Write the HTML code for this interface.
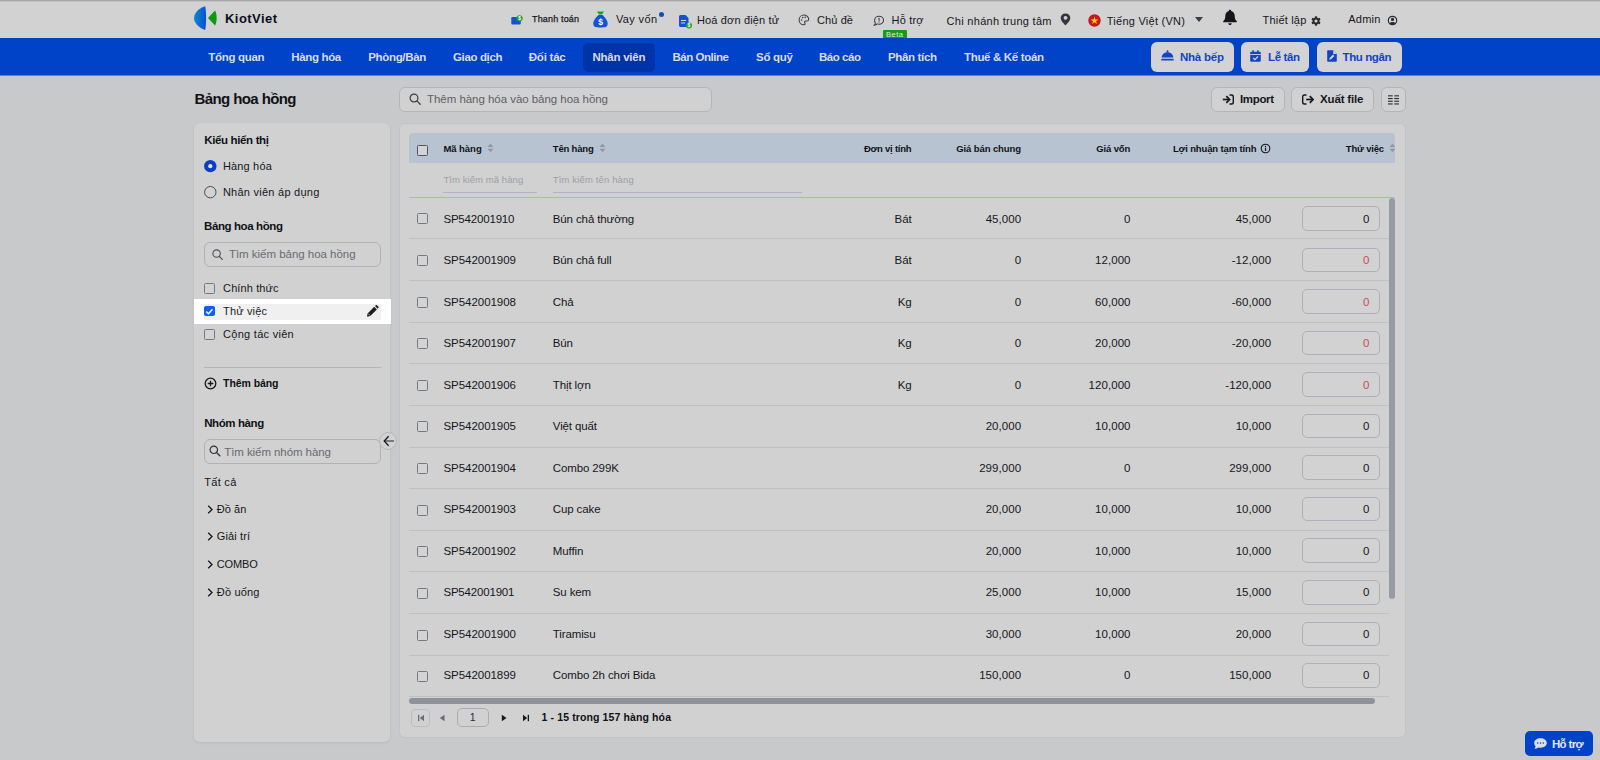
<!DOCTYPE html>
<html lang="vi"><head><meta charset="utf-8"><title>Bảng hoa hồng - KiotViet</title>
<style>
*{box-sizing:border-box;margin:0;padding:0}
html,body{width:1600px;height:760px;overflow:hidden}
body{background:#c8c9cb;font-family:"Liberation Sans",sans-serif;font-size:11.5px;color:#15171c;position:relative}
.a{position:absolute}
.t{position:absolute;white-space:nowrap;line-height:1}
</style></head><body>
<div class="a" style="left:0px;top:0px;width:1600px;height:38px;background:#d2d2d2"></div>
<div class="a" style="left:0px;top:0px;width:1600px;height:1px;background:#a6a6a6"></div>
<div class="a" style="left:0px;top:1px;width:1600px;height:1px;background:#c3c3c3"></div>
<svg class="a" style="left:193px;top:4px" width="28" height="28" viewBox="0 0 28 28"><defs><linearGradient id="lg" x1="0" y1="0" x2="1" y2="0"><stop offset="0" stop-color="#0a8ad0"/><stop offset="1" stop-color="#0a4fd0"/></linearGradient></defs>
<path d="M12.200 2.200 C13.400 8 13.400 20 12.200 26 C5 23.500 1 18.500 1 14 C1 9.500 5 4.500 12.200 2.200 Z" fill="url(#lg)"/>
<path d="M15 14 L22 6.500 C24.200 10 24.200 18 22 21.500 Z" fill="#0d9a12"/></svg>
<span class="t" style="top:12px;font-size:13px;font-weight:bold;color:#0b0f1c;letter-spacing:0.444px;left:225.00px;">KiotViet</span>
<svg class="a" style="left:511px;top:15px" width="12" height="10" viewBox="0 0 12 10"><path d="M0.300 3.300 C0.300 2.500 0.800 2 1.600 2 H8.500 C9.300 2 9.800 2.500 9.800 3.300 V8.200 C9.800 9 9.300 9.500 8.500 9.500 H1.600 C0.800 9.500 0.300 9 0.300 8.200 Z" fill="#1552d0"/><circle cx="8.600" cy="3.300" r="3.100" fill="#2aa32a"/><text x="8.600" y="5.100" font-size="4.800" fill="#fff" text-anchor="middle" font-family="Liberation Sans" font-weight="bold">$</text></svg>
<span class="t" style="top:15px;font-size:9px;letter-spacing:0.161px;left:532.00px;-webkit-text-stroke:0.25px #15171c;">Thanh toán</span>
<svg class="a" style="left:591px;top:10px" width="19" height="19" viewBox="0 0 19 19"><path d="M6 1.500 H13 L11 4.500 H8 Z" fill="#18a418"/><path d="M7.500 5 H11.500 C15 8 17.500 12 16.500 15 C16 16.800 14.500 17.500 9.500 17.500 C4.500 17.500 3 16.800 2.500 15 C1.500 12 4 8 7.500 5 Z" fill="#1552d0"/><text x="9.500" y="15" font-size="8.500" fill="#fff" text-anchor="middle" font-family="Liberation Sans" font-weight="bold">$</text></svg>
<span class="t" style="top:14px;font-size:11px;letter-spacing:0.344px;left:616.00px;">Vay vốn</span>
<div class="a" style="left:658.5px;top:11.5px;width:5px;height:5px;border-radius:50%;background:#0f4bc6"></div>
<svg class="a" style="left:678px;top:14px" width="15" height="15" viewBox="0 0 15 15"><path d="M1 2.500 C1 1.700 1.700 1 2.500 1 H7.500 L10.500 4 V11.500 C10.500 12.300 9.800 13 9 13 H2.500 C1.700 13 1 12.300 1 11.500 Z" fill="#1552d0"/><rect x="3" y="6" width="5" height="1" fill="#d2d2d2"/><rect x="3" y="8.500" width="4" height="1" fill="#d2d2d2"/><circle cx="11" cy="11.500" r="3" fill="#2aa32a"/><text x="11" y="13.200" font-size="4.500" fill="#fff" text-anchor="middle" font-family="Liberation Sans" font-weight="bold">$</text></svg>
<span class="t" style="top:15px;font-size:11px;letter-spacing:0.142px;left:697.00px;">Hoá đơn điện tử</span>
<svg class="a" style="left:798.3px;top:14.4px" width="11.8" height="11.8" viewBox="0 0 14 14"><path d="M7 1.300 C3.700 1.300 1.300 3.900 1.300 7 C1.300 10.200 3.800 12.700 7 12.700 C8 12.700 8.400 12.100 8.400 11.500 C8.400 10.700 7.700 10.300 7.700 9.600 C7.700 8.900 8.300 8.400 9 8.400 H10.500 C11.800 8.400 12.700 7.500 12.700 6.300 C12.700 3.500 10.200 1.300 7 1.300 Z" fill="none" stroke="#3a3d43" stroke-width="1.250"/><circle cx="4.300" cy="7" r="0.900" fill="#3a3d43"/><circle cx="5.600" cy="4.300" r="0.900" fill="#3a3d43"/><circle cx="8.600" cy="4" r="0.900" fill="#3a3d43"/></svg>
<span class="t" style="top:15px;font-size:11px;letter-spacing:0.103px;left:817.00px;">Chủ đề</span>
<svg class="a" style="left:872.7px;top:14.7px" width="11.6" height="11.6" viewBox="0 0 14 14"><path d="M7.300 1.500 C10.300 1.500 12.700 3.600 12.700 6.300 C12.700 9 10.300 11.100 7.300 11.100 C6.500 11.100 5.800 11 5.100 10.700 C4.300 11.500 3.200 12.200 1.500 12.300 C2.300 11.400 2.700 10.500 2.800 9.600 C2.200 8.700 1.900 7.500 1.900 6.300 C1.900 3.600 4.300 1.500 7.300 1.500 Z" fill="none" stroke="#3a3d43" stroke-width="1.250"/><rect x="6.700" y="3.500" width="1.300" height="3.400" fill="#3a3d43"/><rect x="6.700" y="7.800" width="1.300" height="1.300" fill="#3a3d43"/></svg>
<span class="t" style="top:15px;font-size:11px;letter-spacing:0.167px;left:891.60px;">Hỗ trợ</span>
<div class="a" style="left:883px;top:30px;width:24px;height:9px;background:#179a17;border-radius:1px 1px 0 0"></div>
<span class="t" style="top:31px;font-size:7.5px;color:#e2ece2;letter-spacing:0.521px;left:886.00px;">Beta</span>
<span class="t" style="top:16px;font-size:11px;letter-spacing:0.290px;left:946.60px;">Chi nhánh trung tâm</span>
<svg class="a" style="left:1059.5px;top:12.5px" width="11" height="13" viewBox="0 0 11 13"><path d="M5.500 0.500 C2.700 0.500 0.700 2.500 0.700 5 C0.700 7.800 4 10.800 5.500 12.500 C7 10.800 10.300 7.800 10.300 5 C10.300 2.500 8.300 0.500 5.500 0.500 Z" fill="#33363b"/><circle cx="5.500" cy="4.800" r="1.900" fill="#d2d2d2"/></svg>
<svg class="a" style="left:1088px;top:14px" width="13" height="13" viewBox="0 0 13 13"><circle cx="6.500" cy="6.500" r="6.200" fill="#c8161d"/><path d="M6.500 2.500 L7.450 5.400 L10.500 5.400 L8.050 7.200 L8.950 10.100 L6.500 8.300 L4.050 10.100 L4.950 7.200 L2.500 5.400 L5.550 5.400 Z" fill="#f2cf1e"/></svg>
<span class="t" style="top:16px;font-size:11px;letter-spacing:0.250px;left:1106.80px;">Tiếng Việt (VN)</span>
<svg class="a" style="left:1194.5px;top:17px" width="8" height="5" viewBox="0 0 8 5"><path d="M0 0 H8 L4 5 Z" fill="#3a3d42"/></svg>
<svg class="a" style="left:1222px;top:9px" width="16" height="17" viewBox="0 0 16 17"><path d="M8 0.800 C8.700 0.800 9.200 1.300 9.200 2 C11.500 2.500 12.700 4.500 12.700 6.800 C12.700 9.800 13.500 11 14.800 12.200 V13.200 H1.200 V12.200 C2.500 11 3.300 9.800 3.300 6.800 C3.300 4.500 4.500 2.500 6.800 2 C6.800 1.300 7.300 0.800 8 0.800 Z" fill="#14161a"/><path d="M6.300 14.200 H9.700 C9.700 15.200 9 16 8 16 C7 16 6.300 15.200 6.300 14.200 Z" fill="#14161a"/></svg>
<span class="t" style="top:15px;font-size:11px;letter-spacing:0.187px;left:1262.60px;">Thiết lập</span>
<svg class="a" style="left:1311px;top:15.8px" width="10" height="10" viewBox="0 0 11 11"><g transform="translate(5.500,5.500)"><g fill="#2a2c31"><circle r="3.900"/><rect x="-1.200" y="-5.200" width="2.400" height="10.400" rx="0.500"/><rect x="-1.200" y="-5.200" width="2.400" height="10.400" rx="0.500" transform="rotate(60)"/><rect x="-1.200" y="-5.200" width="2.400" height="10.400" rx="0.500" transform="rotate(120)"/></g><circle r="1.700" fill="#d2d2d2"/></g></svg>
<span class="t" style="top:14px;font-size:11px;letter-spacing:0.203px;left:1348.30px;">Admin</span>
<svg class="a" style="left:1387.3px;top:14.5px" width="11" height="11" viewBox="0 0 12 12"><circle cx="6" cy="6" r="4.600" fill="none" stroke="#2a2c31" stroke-width="1.300"/><circle cx="6" cy="4.800" r="1.700" fill="#2a2c31"/><path d="M2.800 9 C3.500 7.300 8.500 7.300 9.200 9 C8.300 10.300 3.700 10.300 2.800 9 Z" fill="#2a2c31"/></svg>
<div class="a" style="left:0px;top:38px;width:1600px;height:37px;background:#0042c8"></div>
<div class="a" style="left:0px;top:75px;width:1600px;height:1px;background:#647fc9"></div>
<div class="a" style="left:583px;top:43px;width:72px;height:28.5px;background:#0033a8;border-radius:5px"></div>
<span class="t" style="top:52px;font-size:11.5px;font-weight:bold;color:#d9dce6;letter-spacing:-0.314px;left:208.25px;">Tổng quan</span>
<span class="t" style="top:52px;font-size:11.5px;font-weight:bold;color:#d9dce6;letter-spacing:-0.342px;left:291.25px;">Hàng hóa</span>
<span class="t" style="top:52px;font-size:11.5px;font-weight:bold;color:#d9dce6;letter-spacing:-0.338px;left:368.25px;">Phòng/Bàn</span>
<span class="t" style="top:52px;font-size:11.5px;font-weight:bold;color:#d9dce6;letter-spacing:-0.363px;left:453.00px;">Giao dịch</span>
<span class="t" style="top:52px;font-size:11.5px;font-weight:bold;color:#d9dce6;letter-spacing:-0.224px;left:528.75px;">Đối tác</span>
<span class="t" style="top:52px;font-size:11.5px;font-weight:bold;color:#d9dce6;letter-spacing:-0.246px;left:592.50px;">Nhân viên</span>
<span class="t" style="top:52px;font-size:11.5px;font-weight:bold;color:#d9dce6;letter-spacing:-0.467px;left:672.50px;">Bán Online</span>
<span class="t" style="top:52px;font-size:11.5px;font-weight:bold;color:#d9dce6;letter-spacing:-0.269px;left:756.00px;">Sổ quỹ</span>
<span class="t" style="top:52px;font-size:11.5px;font-weight:bold;color:#d9dce6;letter-spacing:-0.458px;left:819.00px;">Báo cáo</span>
<span class="t" style="top:52px;font-size:11.5px;font-weight:bold;color:#d9dce6;letter-spacing:-0.346px;left:888.00px;">Phân tích</span>
<span class="t" style="top:52px;font-size:11.5px;font-weight:bold;color:#d9dce6;letter-spacing:-0.334px;left:964.00px;">Thuế &amp; Kế toán</span>
<div class="a" style="left:1151px;top:42px;width:83px;height:30px;background:#d3d3d5;border-radius:6px"></div>
<svg class="a" style="left:1161px;top:50px" width="13" height="12" viewBox="0 0 13 12"><circle cx="6.500" cy="1.300" r="1" fill="#1244c4"/><path d="M6.500 2.300 C9.800 2.300 12 4.500 12.300 7.500 H0.700 C1 4.500 3.200 2.300 6.500 2.300 Z" fill="#1244c4"/><rect x="0.300" y="8.700" width="12.400" height="1.800" rx="0.500" fill="#1244c4"/></svg>
<span class="t" style="top:52px;font-size:11.5px;font-weight:bold;color:#1244c4;letter-spacing:-0.229px;left:1180.00px;">Nhà bếp</span>
<div class="a" style="left:1241px;top:42px;width:68px;height:30px;background:#d3d3d5;border-radius:6px"></div>
<svg class="a" style="left:1250px;top:50px" width="11" height="12" viewBox="0 0 11 12"><path d="M1.500 1.800 H9.500 C10.300 1.800 10.800 2.300 10.800 3.100 V10.500 C10.800 11.300 10.300 11.800 9.500 11.800 H1.500 C0.700 11.800 0.200 11.300 0.200 10.500 V3.100 C0.200 2.300 0.700 1.800 1.500 1.800 Z" fill="#1244c4"/><rect x="2.300" y="0.300" width="1.600" height="2.600" rx="0.500" fill="#1244c4"/><rect x="7.100" y="0.300" width="1.600" height="2.600" rx="0.500" fill="#1244c4"/><rect x="0.200" y="4" width="10.600" height="0.900" fill="#d3d3d5"/><path d="M3.200 8 L4.900 9.600 L8 6.500" fill="none" stroke="#d3d3d5" stroke-width="1.300"/></svg>
<span class="t" style="top:52px;font-size:11.5px;font-weight:bold;color:#1244c4;letter-spacing:-0.375px;left:1268.00px;">Lễ tân</span>
<div class="a" style="left:1317px;top:42px;width:85px;height:30px;background:#d3d3d5;border-radius:6px"></div>
<svg class="a" style="left:1326.5px;top:50px" width="10" height="12" viewBox="0 0 10 12"><path d="M1.200 0.300 H6.200 L9.800 3.900 V10.800 C9.800 11.400 9.400 11.800 8.800 11.800 H1.200 C0.600 11.800 0.200 11.400 0.200 10.800 V1.300 C0.200 0.700 0.600 0.300 1.200 0.300 Z" fill="#1244c4"/><path d="M6.200 0.300 V3.900 H9.800" fill="#d3d3d5"/><path d="M2.300 9.700 L2.700 7.900 L6 4.600 L7.400 6 L4.100 9.300 Z" fill="#d3d3d5"/></svg>
<span class="t" style="top:52px;font-size:11.5px;font-weight:bold;color:#1244c4;letter-spacing:-0.393px;left:1342.50px;">Thu ngân</span>
<span class="t" style="top:91px;font-size:15px;font-weight:bold;color:#101216;letter-spacing:-0.596px;left:194.50px;">Bảng hoa hồng</span>
<div class="a" style="left:399px;top:87px;width:313px;height:25px;background:#d1d1d2;border:1px solid #b4b5b8;border-radius:6px"></div>
<svg class="a" style="left:409px;top:93px" width="12" height="12" viewBox="0 0 12 12"><circle cx="5" cy="5" r="3.900" fill="none" stroke="#3a3d42" stroke-width="1.200"/><path d="M7.900 7.900 L11.200 11.200" stroke="#3a3d42" stroke-width="1.300" stroke-linecap="round"/></svg>
<span class="t" style="top:94px;font-size:11.5px;color:#5d6066;letter-spacing:-0.041px;left:427.00px;">Thêm hàng hóa vào bảng hoa hồng</span>
<div class="a" style="left:1211px;top:87px;width:74px;height:25px;background:#d1d1d2;border:1px solid #b4b5b8;border-radius:6px"></div>
<svg class="a" style="left:1221.5px;top:93.5px" width="12" height="11" viewBox="0 0 12 11"><path d="M0.800 5.500 H7" stroke="#15171c" stroke-width="1.700" fill="none"/><path d="M4.300 2.200 L7.600 5.500 L4.300 8.800" stroke="#15171c" stroke-width="1.700" fill="none"/><path d="M7.500 1 H9.500 C10.600 1 11.300 1.700 11.300 2.800 V8.200 C11.300 9.300 10.600 10 9.500 10 H7.500" stroke="#15171c" stroke-width="1.400" fill="none"/></svg>
<span class="t" style="top:94px;font-size:11.5px;font-weight:bold;letter-spacing:-0.356px;left:1240.00px;">Import</span>
<div class="a" style="left:1291px;top:87px;width:83px;height:25px;background:#d1d1d2;border:1px solid #b4b5b8;border-radius:6px"></div>
<svg class="a" style="left:1301.5px;top:93.5px" width="12" height="11" viewBox="0 0 12 11"><path d="M4.500 1 H2.500 C1.400 1 0.700 1.700 0.700 2.800 V8.200 C0.700 9.300 1.400 10 2.500 10 H4.500" stroke="#15171c" stroke-width="1.400" fill="none"/><path d="M4.200 5.500 H10.500" stroke="#15171c" stroke-width="1.700" fill="none"/><path d="M7.800 2.200 L11.100 5.500 L7.800 8.800" stroke="#15171c" stroke-width="1.700" fill="none"/></svg>
<span class="t" style="top:94px;font-size:11.5px;font-weight:bold;letter-spacing:-0.154px;left:1320.00px;">Xuất file</span>
<div class="a" style="left:1381px;top:87px;width:25px;height:25px;background:#d1d1d2;border:1px solid #b4b5b8;border-radius:6px"></div>
<svg class="a" style="left:1387.5px;top:94.5px" width="11" height="10" viewBox="0 0 11 10"><g fill="#2a2c31"><rect x="0" y="0.300" width="4.700" height="1.100"/><rect x="6.300" y="0.300" width="4.700" height="1.100"/><rect x="0" y="3" width="4.700" height="1.100"/><rect x="6.300" y="3" width="4.700" height="1.100"/><rect x="0" y="5.700" width="4.700" height="1.100"/><rect x="6.300" y="5.700" width="4.700" height="1.100"/><rect x="0" y="8.400" width="4.700" height="1.100"/><rect x="6.300" y="8.400" width="4.700" height="1.100"/></g></svg>
<div class="a" style="left:194px;top:122.5px;width:196px;height:619.5px;background:#d1d1d1;border-radius:6px;box-shadow:0 1px 3px rgba(0,0,0,0.08)"></div>
<span class="t" style="top:135px;font-size:11.5px;font-weight:bold;color:#101216;letter-spacing:-0.350px;left:204.20px;">Kiểu hiển thị</span>
<svg class="a" style="left:203px;top:159px" width="15" height="15" viewBox="0 0 15 15"><circle cx="7.300" cy="7.150" r="6.200" fill="#0a3fc4"/><circle cx="7.300" cy="7.150" r="2.100" fill="#e2e2e2"/></svg>
<span class="t" style="top:161px;font-size:11px;letter-spacing:0.169px;left:222.90px;">Hàng hóa</span>
<svg class="a" style="left:203px;top:184.7px" width="15" height="15" viewBox="0 0 15 15"><circle cx="7.300" cy="7.150" r="5.700" fill="#d3d3d3" stroke="#4a4d55" stroke-width="1"/></svg>
<span class="t" style="top:187px;font-size:11px;letter-spacing:0.253px;left:222.90px;">Nhân viên áp dụng</span>
<span class="t" style="top:221px;font-size:11.5px;font-weight:bold;color:#101216;letter-spacing:-0.391px;left:204.00px;">Bảng hoa hồng</span>
<div class="a" style="left:204px;top:242px;width:177px;height:24.5px;background:#d1d1d1;border:1px solid #b0b1b4;border-radius:6px"></div>
<svg class="a" style="left:211.5px;top:248.5px" width="11" height="11" viewBox="0 0 11 11"><circle cx="4.600" cy="4.600" r="3.700" fill="none" stroke="#4b4e54" stroke-width="1.100"/><path d="M7.300 7.300 L10.300 10.300" stroke="#4b4e54" stroke-width="1.200" stroke-linecap="round"/></svg>
<span class="t" style="top:249px;font-size:11.5px;color:#686b71;letter-spacing:-0.025px;left:228.90px;">Tìm kiếm bảng hoa hồng</span>
<div class="a" style="left:204.4px;top:282.9px;width:10.8px;height:10.8px;border:1px solid #747880;border-radius:1.5px;background:#d3d3d3"></div>
<span class="t" style="top:283px;font-size:11px;letter-spacing:0.105px;left:223.10px;">Chính thức</span>
<div class="a" style="left:194px;top:299px;width:197px;height:24.5px;background:#ffffff"></div>
<div class="a" style="left:204px;top:304px;width:177px;height:16px;background:#f0f0f1"></div>
<div class="a" style="left:204.4px;top:305.6px;width:10.8px;height:10.8px;border-radius:2px;background:#0d5ff0"></div>
<svg class="a" style="left:204.4px;top:305.6px" width="10.8" height="10.8" viewBox="0 0 10.8 10.8"><path d="M2.300 5.600 L4.500 7.700 L8.500 3.300" fill="none" stroke="#fff" stroke-width="1.500"/></svg>
<span class="t" style="top:306px;font-size:11px;color:#1c1e24;letter-spacing:0.153px;left:223.10px;">Thử việc</span>
<svg class="a" style="left:366px;top:305px" width="13" height="12.5" viewBox="0 0 13 12.5"><path d="M1 11.700 L1.600 8.400 L8.200 1.800 L10.900 4.500 L4.300 11.100 Z" fill="#1c1e24"/><path d="M9 1 L9.800 0.300 C10.200 0 10.700 0 11.100 0.400 L12.300 1.600 C12.700 2 12.700 2.500 12.400 2.900 L11.700 3.700 Z" fill="#1c1e24"/><path d="M2.300 8.700 L4 10.400" stroke="#f1f1f2" stroke-width="0.700"/></svg>
<div class="a" style="left:204.4px;top:329.4px;width:10.8px;height:10.8px;border:1px solid #747880;border-radius:1.5px;background:#d3d3d3"></div>
<span class="t" style="top:329px;font-size:11px;letter-spacing:0.278px;left:223.10px;">Cộng tác viên</span>
<div class="a" style="left:204px;top:367px;width:177px;height:1px;background:#b3b4b7"></div>
<svg class="a" style="left:204px;top:376.8px" width="13" height="13" viewBox="0 0 13 13"><circle cx="6.500" cy="6.500" r="5.300" fill="none" stroke="#15171c" stroke-width="1.300"/><path d="M6.500 3.700 V9.300 M3.700 6.500 H9.300" stroke="#15171c" stroke-width="1.300"/></svg>
<span class="t" style="top:378px;font-size:10.5px;font-weight:bold;color:#101216;letter-spacing:-0.077px;left:223.10px;">Thêm bảng</span>
<span class="t" style="top:418px;font-size:11.5px;font-weight:bold;color:#101216;letter-spacing:-0.406px;left:204.20px;">Nhóm hàng</span>
<div class="a" style="left:204px;top:439px;width:177px;height:25px;background:#d1d1d1;border:1px solid #b0b1b4;border-radius:6px"></div>
<svg class="a" style="left:209px;top:445px" width="12" height="12" viewBox="0 0 12 12"><circle cx="4.800" cy="4.800" r="3.700" fill="none" stroke="#2f3237" stroke-width="1.200"/><path d="M7.500 7.500 L10.800 10.800" stroke="#2f3237" stroke-width="1.300" stroke-linecap="round"/></svg>
<span class="t" style="top:447px;font-size:11.5px;color:#686b71;letter-spacing:-0.072px;left:224.20px;">Tìm kiếm nhóm hàng</span>
<div class="a" style="left:379.3px;top:432.3px;width:18.2px;height:18.2px;border-radius:50%;background:#d2d2d2;border:1px solid #b3b7bf"></div>
<svg class="a" style="left:382.8px;top:435.4px" width="12" height="12" viewBox="0 0 12 12"><path d="M1.600 6 H11" fill="none" stroke="#4a4d53" stroke-width="1.300"/><path d="M5.600 1.200 L1.200 6 L5.600 10.800" fill="none" stroke="#15171c" stroke-width="1.300"/></svg>
<span class="t" style="top:477px;font-size:11px;letter-spacing:0.304px;left:204.20px;">Tất cả</span>
<svg class="a" style="left:207.2px;top:504.5px" width="6.5" height="9" viewBox="0 0 6.5 9"><path d="M1.200 0.800 L5 4.500 L1.200 8.200" fill="none" stroke="#15171c" stroke-width="1.300"/></svg>
<span class="t" style="top:504px;font-size:11px;letter-spacing:0.035px;left:216.80px;">Đồ ăn</span>
<svg class="a" style="left:207.2px;top:531.5px" width="6.5" height="9" viewBox="0 0 6.5 9"><path d="M1.200 0.800 L5 4.500 L1.200 8.200" fill="none" stroke="#15171c" stroke-width="1.300"/></svg>
<span class="t" style="top:531px;font-size:11px;letter-spacing:0.113px;left:216.80px;">Giải trí</span>
<svg class="a" style="left:207.2px;top:559.5px" width="6.5" height="9" viewBox="0 0 6.5 9"><path d="M1.200 0.800 L5 4.500 L1.200 8.200" fill="none" stroke="#15171c" stroke-width="1.300"/></svg>
<span class="t" style="top:559px;font-size:11px;letter-spacing:-0.116px;left:216.80px;">COMBO</span>
<svg class="a" style="left:207.2px;top:587.5px" width="6.5" height="9" viewBox="0 0 6.5 9"><path d="M1.200 0.800 L5 4.500 L1.200 8.200" fill="none" stroke="#15171c" stroke-width="1.300"/></svg>
<span class="t" style="top:587px;font-size:11px;letter-spacing:0.184px;left:216.80px;">Đồ uống</span>
<div class="a" style="left:399px;top:123px;width:1006.5px;height:615px;background:#d1d1d1;border:1px solid #c2c3c6;border-radius:6px"></div>
<div class="a" style="left:409px;top:133px;width:986px;height:30px;background:#b7c3d1;border-radius:4px 4px 0 0"></div>
<div class="a" style="left:417px;top:145px;width:11px;height:11px;border:1px solid #50545c;border-radius:1.5px;background:#d1d3d6"></div>
<span class="t" style="top:144px;font-size:9.5px;font-weight:bold;color:#101216;letter-spacing:-0.039px;left:443.40px;">Mã hàng</span>
<span class="t" style="top:144px;font-size:9.5px;font-weight:bold;color:#101216;letter-spacing:-0.176px;left:552.80px;">Tên hàng</span>
<svg class="a" style="left:487px;top:142.8px" width="7" height="9.8" viewBox="0 0 6 9"><path d="M0.300 3.700 L3 0.500 L5.700 3.700 Z M0.300 5.300 L3 8.500 L5.700 5.300 Z" fill="#8f98a5"/></svg>
<svg class="a" style="left:598.8px;top:142.8px" width="7" height="9.8" viewBox="0 0 6 9"><path d="M0.300 3.700 L3 0.500 L5.700 3.700 Z M0.300 5.300 L3 8.500 L5.700 5.300 Z" fill="#8f98a5"/></svg>
<span class="t" style="top:144px;font-size:9.5px;font-weight:bold;color:#101216;letter-spacing:-0.233px;left:863.90px;">Đơn vị tính</span>
<span class="t" style="top:144px;font-size:9.5px;font-weight:bold;color:#101216;letter-spacing:-0.099px;left:956.20px;">Giá bán chung</span>
<span class="t" style="top:144px;font-size:9.5px;font-weight:bold;color:#101216;letter-spacing:-0.141px;left:1096.30px;">Giá vốn</span>
<span class="t" style="top:144px;font-size:9.5px;font-weight:bold;color:#101216;letter-spacing:-0.131px;left:1172.90px;">Lợi nhuận tạm tính</span>
<svg class="a" style="left:1260.3px;top:142.8px" width="11" height="11" viewBox="0 0 11 11"><circle cx="5.500" cy="5.500" r="4.300" fill="none" stroke="#15171c" stroke-width="1.100"/><rect x="4.900" y="4.700" width="1.200" height="3.300" fill="#15171c"/><rect x="4.900" y="2.800" width="1.200" height="1.200" fill="#15171c"/></svg>
<span class="t" style="top:144px;font-size:9.5px;font-weight:bold;color:#101216;letter-spacing:-0.189px;left:1345.80px;">Thử việc</span>
<div class="a" style="left:1389px;top:142.800px;width:6px;height:10px;overflow:hidden"><svg width="7" height="9.800" viewBox="0 0 6 9" style="display:block"><path d="M0.300 3.700 L3 0.500 L5.700 3.700 Z M0.300 5.300 L3 8.500 L5.700 5.300 Z" fill="#8f98a5"/></svg></div>
<span class="t" style="top:175px;font-size:9.5px;color:#9d9fa4;letter-spacing:0.075px;left:443.40px;">Tìm kiếm mã hàng</span>
<div class="a" style="left:443.4px;top:192px;width:93.2px;height:1px;background:#b3b4b7"></div>
<span class="t" style="top:175px;font-size:9.5px;color:#9d9fa4;letter-spacing:0.139px;left:552.80px;">Tìm kiếm tên hàng</span>
<div class="a" style="left:552.8px;top:192px;width:249.5px;height:1px;background:#b3b4b7"></div>
<div class="a" style="left:409px;top:197px;width:986px;height:1px;background:#a3b6d3"></div>
<div class="a" style="left:409px;top:238px;width:980px;height:1px;background:#bfc0c3"></div>
<div class="a" style="left:417px;top:213px;width:11px;height:11px;border:1px solid #747880;border-radius:1.5px;background:#d3d3d3"></div>
<span class="t" style="top:214px;font-size:11.5px;letter-spacing:-0.181px;left:443.40px;">SP542001910</span>
<span class="t" style="top:214px;font-size:11.5px;letter-spacing:-0.120px;left:552.80px;">Bún chả thường</span>
<span class="t" style="top:214px;font-size:11.5px;letter-spacing:-0.120px;right:688.52px;">Bát</span>
<span class="t" style="top:214px;font-size:11.5px;letter-spacing:0.080px;right:578.72px;">45,000</span>
<span class="t" style="top:214px;font-size:11.5px;letter-spacing:0.080px;right:469.42px;">0</span>
<span class="t" style="top:214px;font-size:11.5px;letter-spacing:0.080px;right:328.72px;">45,000</span>
<div class="a" style="left:1302px;top:206px;width:78px;height:25px;border:1px solid #adb0b6;border-radius:5px;background:#d2d2d2"></div>
<span class="t" style="top:214px;font-size:11.5px;right:230.50px;">0</span>
<div class="a" style="left:409px;top:280px;width:980px;height:1px;background:#bfc0c3"></div>
<div class="a" style="left:417px;top:255px;width:11px;height:11px;border:1px solid #747880;border-radius:1.5px;background:#d3d3d3"></div>
<span class="t" style="top:255px;font-size:11.5px;letter-spacing:-0.031px;left:443.40px;">SP542001909</span>
<span class="t" style="top:255px;font-size:11.5px;letter-spacing:-0.120px;left:552.80px;">Bún chả full</span>
<span class="t" style="top:255px;font-size:11.5px;letter-spacing:-0.120px;right:688.52px;">Bát</span>
<span class="t" style="top:255px;font-size:11.5px;letter-spacing:0.080px;right:578.72px;">0</span>
<span class="t" style="top:255px;font-size:11.5px;letter-spacing:0.080px;right:469.42px;">12,000</span>
<span class="t" style="top:255px;font-size:11.5px;letter-spacing:0.080px;right:328.72px;">-12,000</span>
<div class="a" style="left:1302px;top:248px;width:78px;height:24px;border:1px solid #adb0b6;border-radius:5px;background:#d2d2d2"></div>
<span class="t" style="top:255px;font-size:11.5px;color:#c4505c;right:230.50px;">0</span>
<div class="a" style="left:409px;top:322px;width:980px;height:1px;background:#bfc0c3"></div>
<div class="a" style="left:417px;top:297px;width:11px;height:11px;border:1px solid #747880;border-radius:1.5px;background:#d3d3d3"></div>
<span class="t" style="top:297px;font-size:11.5px;letter-spacing:-0.031px;left:443.40px;">SP542001908</span>
<span class="t" style="top:297px;font-size:11.5px;letter-spacing:-0.120px;left:552.80px;">Chả</span>
<span class="t" style="top:297px;font-size:11.5px;letter-spacing:-0.120px;right:688.52px;">Kg</span>
<span class="t" style="top:297px;font-size:11.5px;letter-spacing:0.080px;right:578.72px;">0</span>
<span class="t" style="top:297px;font-size:11.5px;letter-spacing:0.080px;right:469.42px;">60,000</span>
<span class="t" style="top:297px;font-size:11.5px;letter-spacing:0.080px;right:328.72px;">-60,000</span>
<div class="a" style="left:1302px;top:289px;width:78px;height:25px;border:1px solid #adb0b6;border-radius:5px;background:#d2d2d2"></div>
<span class="t" style="top:297px;font-size:11.5px;color:#c4505c;right:230.50px;">0</span>
<div class="a" style="left:409px;top:363px;width:980px;height:1px;background:#bfc0c3"></div>
<div class="a" style="left:417px;top:338px;width:11px;height:11px;border:1px solid #747880;border-radius:1.5px;background:#d3d3d3"></div>
<span class="t" style="top:338px;font-size:11.5px;letter-spacing:-0.031px;left:443.40px;">SP542001907</span>
<span class="t" style="top:338px;font-size:11.5px;letter-spacing:-0.120px;left:552.80px;">Bún</span>
<span class="t" style="top:338px;font-size:11.5px;letter-spacing:-0.120px;right:688.52px;">Kg</span>
<span class="t" style="top:338px;font-size:11.5px;letter-spacing:0.080px;right:578.72px;">0</span>
<span class="t" style="top:338px;font-size:11.5px;letter-spacing:0.080px;right:469.42px;">20,000</span>
<span class="t" style="top:338px;font-size:11.5px;letter-spacing:0.080px;right:328.72px;">-20,000</span>
<div class="a" style="left:1302px;top:331px;width:78px;height:24px;border:1px solid #adb0b6;border-radius:5px;background:#d2d2d2"></div>
<span class="t" style="top:338px;font-size:11.5px;color:#c4505c;right:230.50px;">0</span>
<div class="a" style="left:409px;top:405px;width:980px;height:1px;background:#bfc0c3"></div>
<div class="a" style="left:417px;top:380px;width:11px;height:11px;border:1px solid #747880;border-radius:1.5px;background:#d3d3d3"></div>
<span class="t" style="top:380px;font-size:11.5px;letter-spacing:-0.031px;left:443.40px;">SP542001906</span>
<span class="t" style="top:380px;font-size:11.5px;letter-spacing:-0.120px;left:552.80px;">Thịt lợn</span>
<span class="t" style="top:380px;font-size:11.5px;letter-spacing:-0.120px;right:688.52px;">Kg</span>
<span class="t" style="top:380px;font-size:11.5px;letter-spacing:0.080px;right:578.72px;">0</span>
<span class="t" style="top:380px;font-size:11.5px;letter-spacing:0.080px;right:469.42px;">120,000</span>
<span class="t" style="top:380px;font-size:11.5px;letter-spacing:0.080px;right:328.72px;">-120,000</span>
<div class="a" style="left:1302px;top:372px;width:78px;height:25px;border:1px solid #adb0b6;border-radius:5px;background:#d2d2d2"></div>
<span class="t" style="top:380px;font-size:11.5px;color:#c4505c;right:230.50px;">0</span>
<div class="a" style="left:409px;top:447px;width:980px;height:1px;background:#bfc0c3"></div>
<div class="a" style="left:417px;top:421px;width:11px;height:11px;border:1px solid #747880;border-radius:1.5px;background:#d3d3d3"></div>
<span class="t" style="top:421px;font-size:11.5px;letter-spacing:-0.031px;left:443.40px;">SP542001905</span>
<span class="t" style="top:421px;font-size:11.5px;letter-spacing:-0.120px;left:552.80px;">Việt quất</span>
<span class="t" style="top:421px;font-size:11.5px;letter-spacing:0.080px;right:578.72px;">20,000</span>
<span class="t" style="top:421px;font-size:11.5px;letter-spacing:0.080px;right:469.42px;">10,000</span>
<span class="t" style="top:421px;font-size:11.5px;letter-spacing:0.080px;right:328.72px;">10,000</span>
<div class="a" style="left:1302px;top:414px;width:78px;height:24px;border:1px solid #adb0b6;border-radius:5px;background:#d2d2d2"></div>
<span class="t" style="top:421px;font-size:11.5px;right:230.50px;">0</span>
<div class="a" style="left:409px;top:488px;width:980px;height:1px;background:#bfc0c3"></div>
<div class="a" style="left:417px;top:463px;width:11px;height:11px;border:1px solid #747880;border-radius:1.5px;background:#d3d3d3"></div>
<span class="t" style="top:463px;font-size:11.5px;letter-spacing:-0.031px;left:443.40px;">SP542001904</span>
<span class="t" style="top:463px;font-size:11.5px;letter-spacing:-0.120px;left:552.80px;">Combo 299K</span>
<span class="t" style="top:463px;font-size:11.5px;letter-spacing:0.080px;right:578.72px;">299,000</span>
<span class="t" style="top:463px;font-size:11.5px;letter-spacing:0.080px;right:469.42px;">0</span>
<span class="t" style="top:463px;font-size:11.5px;letter-spacing:0.080px;right:328.72px;">299,000</span>
<div class="a" style="left:1302px;top:455px;width:78px;height:25px;border:1px solid #adb0b6;border-radius:5px;background:#d2d2d2"></div>
<span class="t" style="top:463px;font-size:11.5px;right:230.50px;">0</span>
<div class="a" style="left:409px;top:530px;width:980px;height:1px;background:#bfc0c3"></div>
<div class="a" style="left:417px;top:505px;width:11px;height:11px;border:1px solid #747880;border-radius:1.5px;background:#d3d3d3"></div>
<span class="t" style="top:504px;font-size:11.5px;letter-spacing:-0.031px;left:443.40px;">SP542001903</span>
<span class="t" style="top:504px;font-size:11.5px;letter-spacing:-0.120px;left:552.80px;">Cup cake</span>
<span class="t" style="top:504px;font-size:11.5px;letter-spacing:0.080px;right:578.72px;">20,000</span>
<span class="t" style="top:504px;font-size:11.5px;letter-spacing:0.080px;right:469.42px;">10,000</span>
<span class="t" style="top:504px;font-size:11.5px;letter-spacing:0.080px;right:328.72px;">10,000</span>
<div class="a" style="left:1302px;top:497px;width:78px;height:24px;border:1px solid #adb0b6;border-radius:5px;background:#d2d2d2"></div>
<span class="t" style="top:504px;font-size:11.5px;right:230.50px;">0</span>
<div class="a" style="left:409px;top:571px;width:980px;height:1px;background:#bfc0c3"></div>
<div class="a" style="left:417px;top:546px;width:11px;height:11px;border:1px solid #747880;border-radius:1.5px;background:#d3d3d3"></div>
<span class="t" style="top:546px;font-size:11.5px;letter-spacing:-0.031px;left:443.40px;">SP542001902</span>
<span class="t" style="top:546px;font-size:11.5px;letter-spacing:-0.120px;left:552.80px;">Muffin</span>
<span class="t" style="top:546px;font-size:11.5px;letter-spacing:0.080px;right:578.72px;">20,000</span>
<span class="t" style="top:546px;font-size:11.5px;letter-spacing:0.080px;right:469.42px;">10,000</span>
<span class="t" style="top:546px;font-size:11.5px;letter-spacing:0.080px;right:328.72px;">10,000</span>
<div class="a" style="left:1302px;top:538px;width:78px;height:25px;border:1px solid #adb0b6;border-radius:5px;background:#d2d2d2"></div>
<span class="t" style="top:546px;font-size:11.5px;right:230.50px;">0</span>
<div class="a" style="left:409px;top:613px;width:980px;height:1px;background:#bfc0c3"></div>
<div class="a" style="left:417px;top:588px;width:11px;height:11px;border:1px solid #747880;border-radius:1.5px;background:#d3d3d3"></div>
<span class="t" style="top:587px;font-size:11.5px;letter-spacing:-0.181px;left:443.40px;">SP542001901</span>
<span class="t" style="top:587px;font-size:11.5px;letter-spacing:-0.120px;left:552.80px;">Su kem</span>
<span class="t" style="top:587px;font-size:11.5px;letter-spacing:0.080px;right:578.72px;">25,000</span>
<span class="t" style="top:587px;font-size:11.5px;letter-spacing:0.080px;right:469.42px;">10,000</span>
<span class="t" style="top:587px;font-size:11.5px;letter-spacing:0.080px;right:328.72px;">15,000</span>
<div class="a" style="left:1302px;top:580px;width:78px;height:25px;border:1px solid #adb0b6;border-radius:5px;background:#d2d2d2"></div>
<span class="t" style="top:587px;font-size:11.5px;right:230.50px;">0</span>
<div class="a" style="left:409px;top:655px;width:980px;height:1px;background:#bfc0c3"></div>
<div class="a" style="left:417px;top:630px;width:11px;height:11px;border:1px solid #747880;border-radius:1.5px;background:#d3d3d3"></div>
<span class="t" style="top:629px;font-size:11.5px;letter-spacing:-0.031px;left:443.40px;">SP542001900</span>
<span class="t" style="top:629px;font-size:11.5px;letter-spacing:-0.120px;left:552.80px;">Tiramisu</span>
<span class="t" style="top:629px;font-size:11.5px;letter-spacing:0.080px;right:578.72px;">30,000</span>
<span class="t" style="top:629px;font-size:11.5px;letter-spacing:0.080px;right:469.42px;">10,000</span>
<span class="t" style="top:629px;font-size:11.5px;letter-spacing:0.080px;right:328.72px;">20,000</span>
<div class="a" style="left:1302px;top:622px;width:78px;height:24px;border:1px solid #adb0b6;border-radius:5px;background:#d2d2d2"></div>
<span class="t" style="top:629px;font-size:11.5px;right:230.50px;">0</span>
<div class="a" style="left:409px;top:696px;width:980px;height:1px;background:#bfc0c3"></div>
<div class="a" style="left:417px;top:671px;width:11px;height:11px;border:1px solid #747880;border-radius:1.5px;background:#d3d3d3"></div>
<span class="t" style="top:670px;font-size:11.5px;letter-spacing:-0.031px;left:443.40px;">SP542001899</span>
<span class="t" style="top:670px;font-size:11.5px;letter-spacing:-0.120px;left:552.80px;">Combo 2h chơi Bida</span>
<span class="t" style="top:670px;font-size:11.5px;letter-spacing:0.080px;right:578.72px;">150,000</span>
<span class="t" style="top:670px;font-size:11.5px;letter-spacing:0.080px;right:469.42px;">0</span>
<span class="t" style="top:670px;font-size:11.5px;letter-spacing:0.080px;right:328.72px;">150,000</span>
<div class="a" style="left:1302px;top:663px;width:78px;height:25px;border:1px solid #adb0b6;border-radius:5px;background:#d2d2d2"></div>
<span class="t" style="top:670px;font-size:11.5px;right:230.50px;">0</span>
<div class="a" style="left:1389.3px;top:198px;width:5.5px;height:401px;background:#979ba6;border-radius:3px"></div>
<div class="a" style="left:409px;top:698px;width:966px;height:5.5px;background:#8e929d;border-radius:3px"></div>
<div class="a" style="left:411px;top:709px;width:18.5px;height:18px;border:1px solid #bcbdc0;border-radius:4px;background:#d1d1d1"></div>
<svg class="a" style="left:416.5px;top:714px" width="8" height="8" viewBox="0 0 8 8"><rect x="1" y="0.800" width="1.300" height="6.400" fill="#6a6d73"/><path d="M7 0.800 V7.200 L2.800 4 Z" fill="#6a6d73"/></svg>
<svg class="a" style="left:439px;top:714px" width="6" height="8" viewBox="0 0 6 8"><path d="M5.500 0.800 V7.200 L0.800 4 Z" fill="#6a6d73"/></svg>
<div class="a" style="left:457px;top:708px;width:32px;height:19px;border:1px solid #a9acb2;border-radius:5px;background:#d1d1d1"></div>
<span class="t" style="top:712px;font-size:10.5px;color:#2a2c31;right:1124.40px;">1</span>
<svg class="a" style="left:501px;top:714px" width="6" height="8" viewBox="0 0 6 8"><path d="M0.800 0.800 V7.200 L5.500 4 Z" fill="#15171c"/></svg>
<svg class="a" style="left:521.5px;top:714px" width="8" height="8" viewBox="0 0 8 8"><path d="M1 0.800 V7.200 L5.200 4 Z" fill="#15171c"/><rect x="5.700" y="0.800" width="1.300" height="6.400" fill="#15171c"/></svg>
<span class="t" style="top:712px;font-size:10.5px;font-weight:bold;color:#101216;letter-spacing:0.116px;left:541.60px;">1 - 15 trong 157 hàng hóa</span>
<div class="a" style="left:1525px;top:731px;width:68px;height:25px;background:#0042c8;border-radius:5px"></div>
<svg class="a" style="left:1533.8px;top:738.2px" width="13" height="11" viewBox="0 0 13 11"><path d="M6.500 0.300 C10.100 0.300 12.800 2.400 12.800 5 C12.800 7.600 10.100 9.700 6.500 9.700 C5.700 9.700 4.900 9.600 4.200 9.400 C3.300 10.200 2 10.700 0.400 10.700 C1.100 10 1.500 9.100 1.600 8.200 C0.700 7.300 0.200 6.200 0.200 5 C0.200 2.400 2.900 0.300 6.500 0.300 Z" fill="#dcdfe6"/><circle cx="3.700" cy="5" r="0.800" fill="#0042c8"/><circle cx="6.500" cy="5" r="0.800" fill="#0042c8"/><circle cx="9.300" cy="5" r="0.800" fill="#0042c8"/></svg>
<span class="t" style="top:739px;font-size:11.5px;font-weight:bold;color:#e3e6ee;letter-spacing:-0.643px;left:1551.90px;">Hỗ trợ</span>
</body></html>
